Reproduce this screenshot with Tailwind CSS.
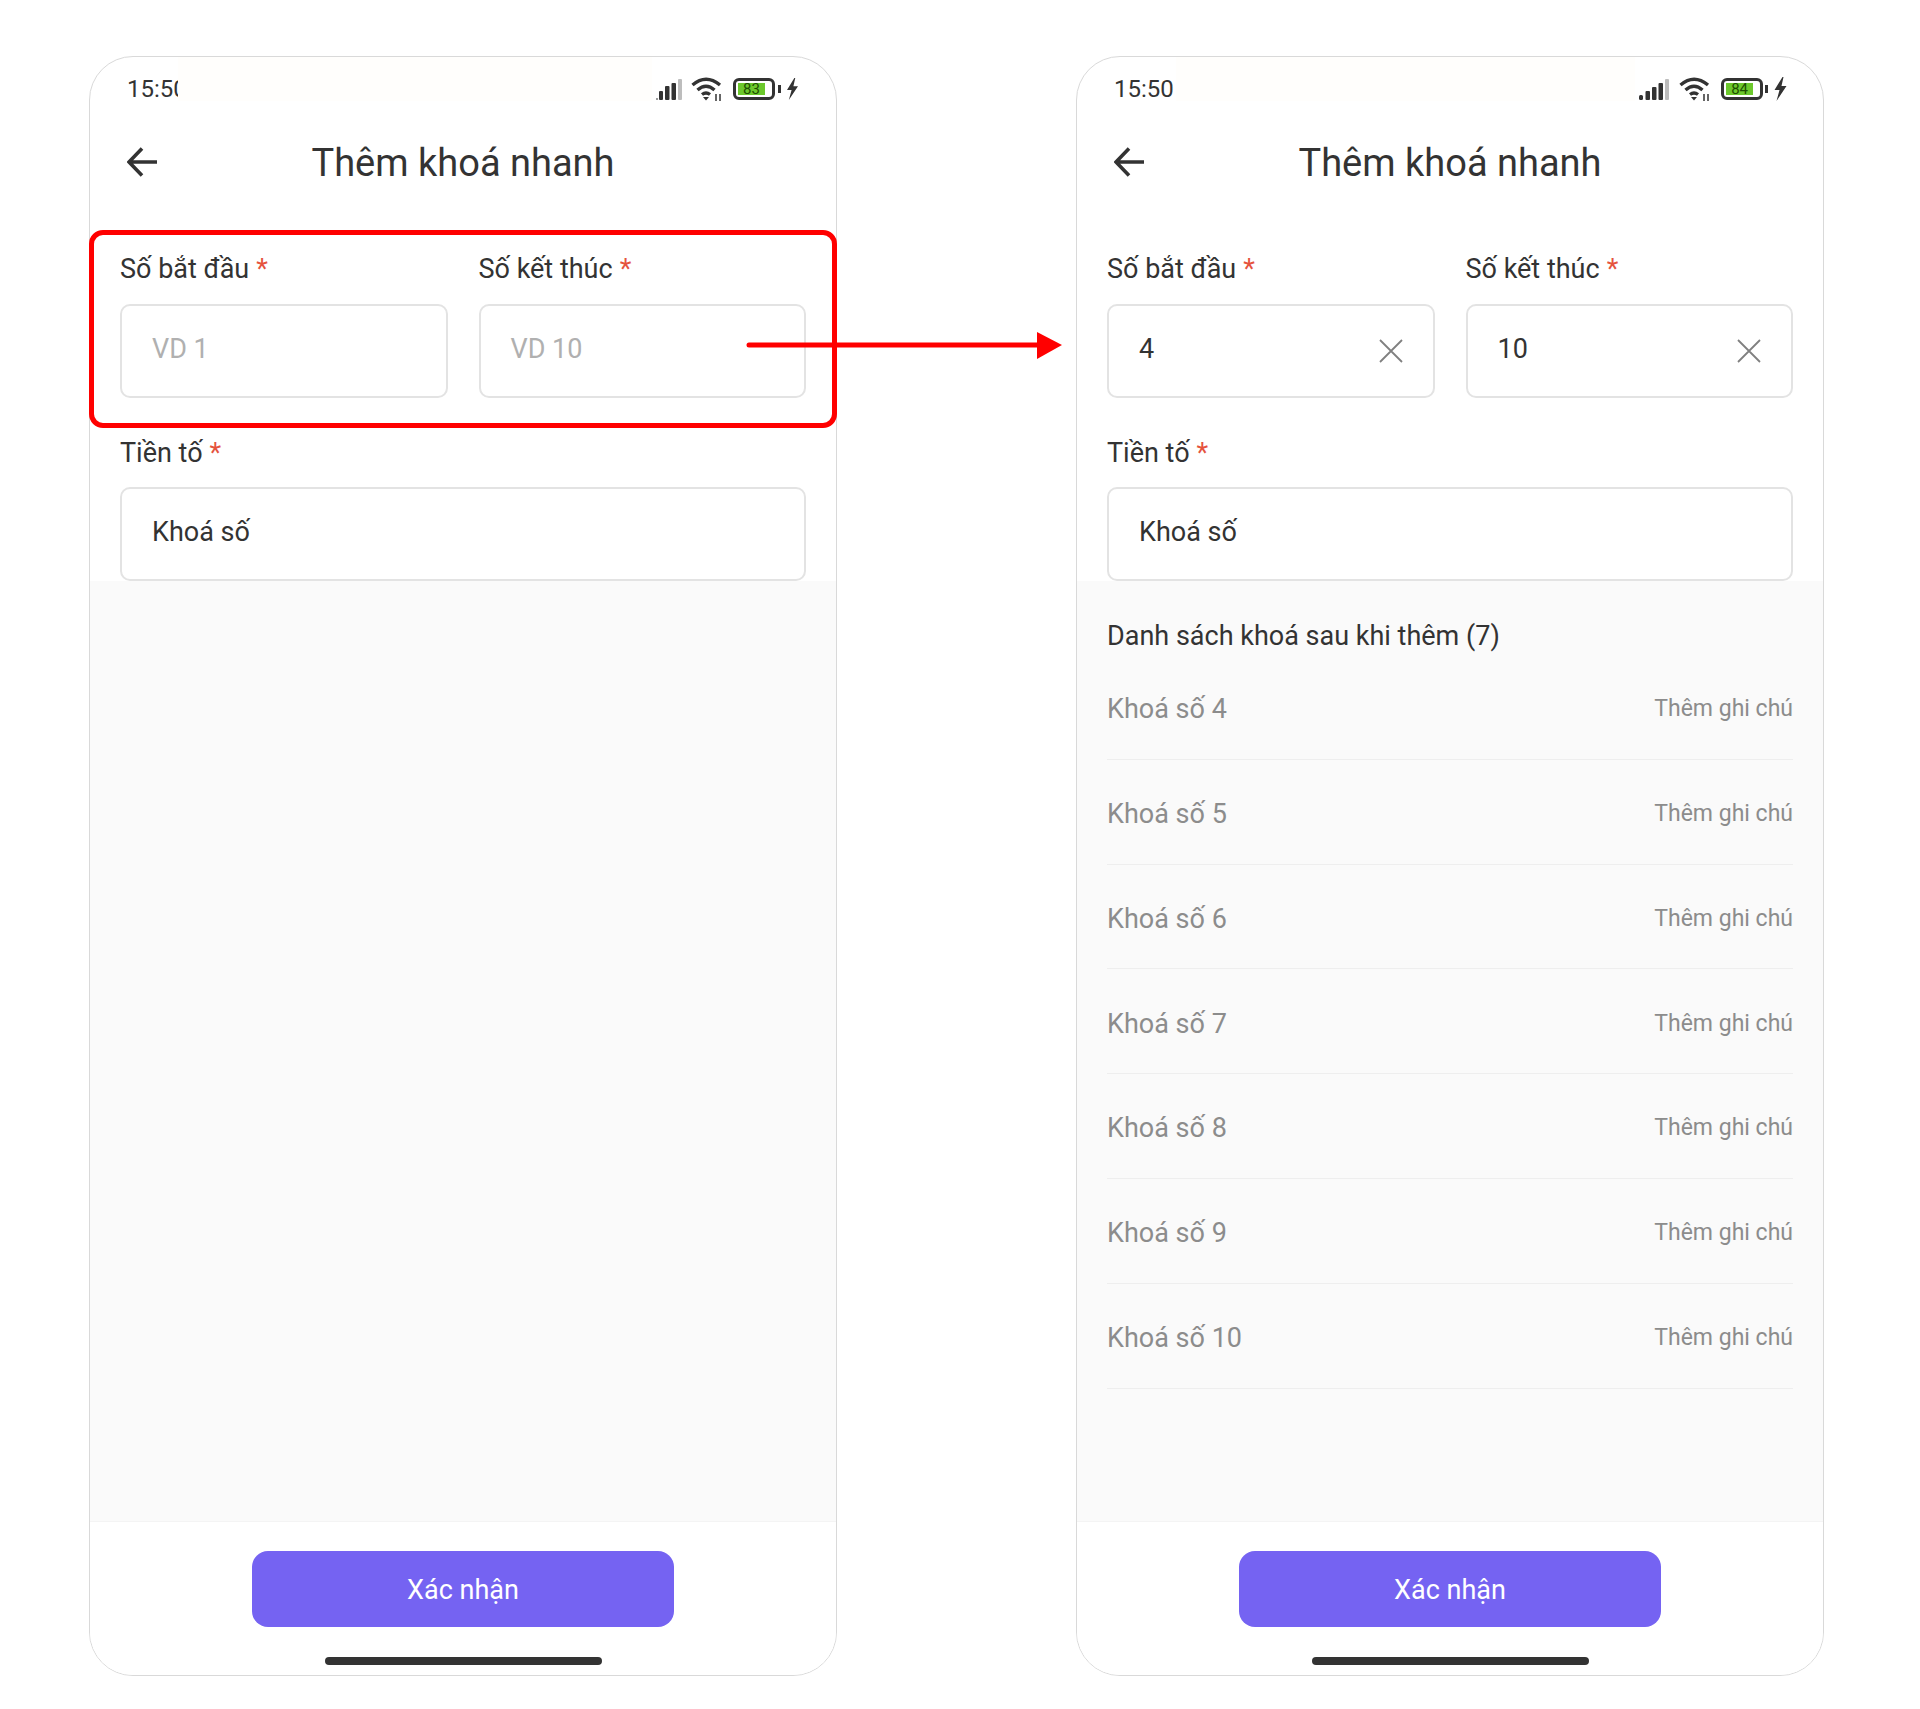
<!DOCTYPE html>
<html lang="en">
<head>
    <meta charset="UTF-8">
    <title>Thêm khoá nhanh</title>
    <script src="https://cdn.jsdelivr.net/npm/@tailwindcss/browser@4"></script>
</head>
<body class="bg-white font-['Roboto',sans-serif] text-[#333333]">
<div class="relative w-[1920px] h-[1709px] flex pl-[89px] pt-[56px] gap-[239px]">

    <!-- phone 1: empty form -->
    <div class="w-[748px] h-[1620px] border border-[#d9d9d9] rounded-[44px] overflow-hidden flex flex-col bg-white">
        <div class="h-[44px] shrink-0 flex pl-[37px] pr-[38px]">
            <div class="w-[51px] pt-[20px] flex items-center overflow-hidden text-[24px] whitespace-nowrap">15:50</div>
            <div class="flex-1 bg-[#fffefc] mr-[4px]"></div>
            <div class="pt-[20px] flex items-center">
                <svg width="26" height="21" viewBox="0 0 26 21" fill="#333"><rect x="0" y="19" width="2" height="2" fill="#999"/><rect x="3" y="12" width="4" height="9" rx="1"/><rect x="9" y="7" width="4.5" height="14" rx="1"/><rect x="15.5" y="4" width="4.5" height="17" rx="1"/><rect x="22" y="0" width="4" height="21" rx="1" fill="#bdbdbd"/></svg>
                <svg class="ml-[9px]" width="32" height="24" viewBox="0 0 32 24" fill="none" stroke="#333" stroke-width="3.4"><path d="M1.5 8Q15-3.5 29 8"/><path d="M6.5 13Q15 5.5 23.5 13"/><path d="M11 17.5Q15 14.5 19 17.5"/><path d="M12 20h6l-3 3.5z" fill="#333" stroke="none"/><path d="M25 17v7M29 17v7" stroke-width="1.5"/></svg>
                <div class="ml-[10px] w-[42px] h-[22px] border-[3px] border-[#333] rounded-[6px] p-[2px] flex"><div class="w-[84%] h-[12px] bg-[#6cc82c] text-[15px] leading-[12px] text-center text-[#1c4f00]">83</div></div>
                <div class="ml-[3px] w-[3px] h-[8px] bg-[#333]"></div>
                <svg class="ml-[6px]" width="11" height="24" viewBox="0 0 12 24" fill="#333"><path d="M8 0 0 13H5L2 24 12 9H7L9 0Z"/></svg>
            </div>
        </div>
        <div class="h-[128px] shrink-0 relative flex items-center justify-center">
            <svg class="absolute left-[37px] top-[46px]" width="30" height="30" viewBox="0 0 30 30" fill="none" stroke="#333" stroke-width="3.6"><path d="M30 15H3M15 1.5 2 15 15 28.5"/></svg>
            <div class="text-[38px] pb-[3px]">Thêm khoá nhanh</div>
        </div>
        <div class="px-[30px] shrink-0">
            <div class="grid grid-cols-2 gap-x-[31px]">
                <div>
                    <div class="h-[75px] pt-[5px] flex items-center text-[27px]">Số bắt đầu<span class="text-[#e5533d] ml-[7px]">*</span></div>
                    <div class="h-[94px] border-2 border-[#e3e3e3] rounded-[10px] pl-[30px] pb-[4px] flex items-center text-[27px] text-[#b0b0b0]">VD 1</div>
                </div>
                <div>
                    <div class="h-[75px] pt-[5px] flex items-center text-[27px]">Số kết thúc<span class="text-[#e5533d] ml-[7px]">*</span></div>
                    <div class="h-[94px] border-2 border-[#e3e3e3] rounded-[10px] pl-[30px] pb-[4px] flex items-center text-[27px] text-[#b0b0b0]">VD 10</div>
                </div>
            </div>
            <div class="h-[89px] pt-[21px] flex items-center text-[27px]">Tiền tố<span class="text-[#e5533d] ml-[7px]">*</span></div>
            <div class="h-[94px] border-2 border-[#e3e3e3] rounded-[10px] pl-[30px] pb-[4px] flex items-center text-[27px]">Khoá số</div>
        </div>
        <div class="flex-1 bg-[#fafafa]"></div>
        <div class="h-[154px] shrink-0 bg-white border-t border-[#f4f4f4] flex flex-col items-center pt-[29px]">
            <div class="w-[422px] h-[76px] pt-[3px] rounded-[16px] bg-[#7563f2] text-white text-[27px] flex items-center justify-center">Xác nhận</div>
            <div class="w-[277px] h-[8px] rounded-full bg-[#333] mt-[30px]"></div>
        </div>
    </div>

    <!-- phone 2: filled form with generated list -->
    <div class="w-[748px] h-[1620px] border border-[#d9d9d9] rounded-[44px] overflow-hidden flex flex-col bg-white">
        <div class="h-[44px] shrink-0 flex pl-[37px] pr-[36px]">
            <div class="w-[62px] pt-[20px] flex items-center text-[24px] whitespace-nowrap">15:50</div>
            <div class="flex-1 bg-[#fffefc] mr-[4px]"></div>
            <div class="pt-[20px] flex items-center">
                <svg width="30" height="21" viewBox="0 0 30 21" fill="#333"><rect x="0" y="16" width="4" height="5" rx="1.5"/><rect x="6.5" y="12" width="4.5" height="9" rx="1"/><rect x="13" y="8" width="4.5" height="13" rx="1"/><rect x="19.5" y="4" width="4.5" height="17" rx="1"/><rect x="26" y="0" width="4" height="21" rx="1" fill="#bdbdbd"/></svg>
                <svg class="ml-[10px]" width="32" height="24" viewBox="0 0 32 24" fill="none" stroke="#333" stroke-width="3.4"><path d="M1.5 8Q15-3.5 29 8"/><path d="M6.5 13Q15 5.5 23.5 13"/><path d="M11 17.5Q15 14.5 19 17.5"/><path d="M12 20h6l-3 3.5z" fill="#333" stroke="none"/><path d="M25 17v7M29 17v7" stroke-width="1.5"/></svg>
                <div class="ml-[10px] w-[42px] h-[22px] border-[3px] border-[#333] rounded-[6px] p-[2px] flex"><div class="w-[85%] h-[12px] bg-[#6cc82c] text-[15px] leading-[12px] text-center text-[#1c4f00]">84</div></div>
                <div class="ml-[2px] w-[3px] h-[8px] bg-[#333]"></div>
                <svg class="ml-[6px]" width="13" height="24" viewBox="0 0 12 24" fill="#333"><path d="M8 0 0 13H5L2 24 12 9H7L9 0Z"/></svg>
            </div>
        </div>
        <div class="h-[128px] shrink-0 relative flex items-center justify-center">
            <svg class="absolute left-[37px] top-[46px]" width="30" height="30" viewBox="0 0 30 30" fill="none" stroke="#333" stroke-width="3.6"><path d="M30 15H3M15 1.5 2 15 15 28.5"/></svg>
            <div class="text-[38px] pb-[3px]">Thêm khoá nhanh</div>
        </div>
        <div class="px-[30px] shrink-0">
            <div class="grid grid-cols-2 gap-x-[31px]">
                <div>
                    <div class="h-[75px] pt-[5px] flex items-center text-[27px]">Số bắt đầu<span class="text-[#e5533d] ml-[7px]">*</span></div>
                    <div class="h-[94px] border-2 border-[#e3e3e3] rounded-[10px] pl-[30px] pr-[30px] pb-[4px] flex items-center justify-between text-[27px]">4
                        <svg class="mt-[4px]" width="24" height="24" viewBox="0 0 24 24" fill="none" stroke="#808080" stroke-width="1.8"><path d="M1 1 23 23M23 1 1 23"/></svg>
                    </div>
                </div>
                <div>
                    <div class="h-[75px] pt-[5px] flex items-center text-[27px]">Số kết thúc<span class="text-[#e5533d] ml-[7px]">*</span></div>
                    <div class="h-[94px] border-2 border-[#e3e3e3] rounded-[10px] pl-[30px] pr-[30px] pb-[4px] flex items-center justify-between text-[27px]">10
                        <svg class="mt-[4px]" width="24" height="24" viewBox="0 0 24 24" fill="none" stroke="#808080" stroke-width="1.8"><path d="M1 1 23 23M23 1 1 23"/></svg>
                    </div>
                </div>
            </div>
            <div class="h-[89px] pt-[21px] flex items-center text-[27px]">Tiền tố<span class="text-[#e5533d] ml-[7px]">*</span></div>
            <div class="h-[94px] border-2 border-[#e3e3e3] rounded-[10px] pl-[30px] pb-[4px] flex items-center text-[27px]">Khoá số</div>
        </div>
        <div class="flex-1 bg-[#fafafa] px-[30px]">
            <div class="h-[74px] pt-[36px] flex items-center text-[27px]">Danh sách khoá sau khi thêm (7)</div>
            <div class="h-[104.8px] pt-[5px] border-b border-[#eeeeee] flex items-center justify-between text-[27px] text-[#8c8c8c]">Khoá số 4<span class="text-[23px]">Thêm ghi chú</span></div>
            <div class="h-[104.8px] pt-[5px] border-b border-[#eeeeee] flex items-center justify-between text-[27px] text-[#8c8c8c]">Khoá số 5<span class="text-[23px]">Thêm ghi chú</span></div>
            <div class="h-[104.8px] pt-[5px] border-b border-[#eeeeee] flex items-center justify-between text-[27px] text-[#8c8c8c]">Khoá số 6<span class="text-[23px]">Thêm ghi chú</span></div>
            <div class="h-[104.8px] pt-[5px] border-b border-[#eeeeee] flex items-center justify-between text-[27px] text-[#8c8c8c]">Khoá số 7<span class="text-[23px]">Thêm ghi chú</span></div>
            <div class="h-[104.8px] pt-[5px] border-b border-[#eeeeee] flex items-center justify-between text-[27px] text-[#8c8c8c]">Khoá số 8<span class="text-[23px]">Thêm ghi chú</span></div>
            <div class="h-[104.8px] pt-[5px] border-b border-[#eeeeee] flex items-center justify-between text-[27px] text-[#8c8c8c]">Khoá số 9<span class="text-[23px]">Thêm ghi chú</span></div>
            <div class="h-[104.8px] pt-[5px] border-b border-[#eeeeee] flex items-center justify-between text-[27px] text-[#8c8c8c]">Khoá số 10<span class="text-[23px]">Thêm ghi chú</span></div>
        </div>
        <div class="h-[154px] shrink-0 bg-white border-t border-[#f4f4f4] flex flex-col items-center pt-[29px]">
            <div class="w-[422px] h-[76px] pt-[3px] rounded-[16px] bg-[#7563f2] text-white text-[27px] flex items-center justify-center">Xác nhận</div>
            <div class="w-[277px] h-[8px] rounded-full bg-[#333] mt-[30px]"></div>
        </div>
    </div>

    <!-- annotation over the first phone -->
    <div class="absolute left-[89px] top-[230px] w-[748px] h-[198px] border-[5px] border-[#ff0000] rounded-[14px]"></div>
    <svg class="absolute left-[745px] top-[330px]" width="320" height="30" viewBox="0 0 320 30"><path d="M4 15H295" stroke="#ff0000" stroke-width="5" stroke-linecap="round"/><path d="M292 2 317 15 292 29Z" fill="#ff0000"/></svg>
</div>
</body>
</html>
